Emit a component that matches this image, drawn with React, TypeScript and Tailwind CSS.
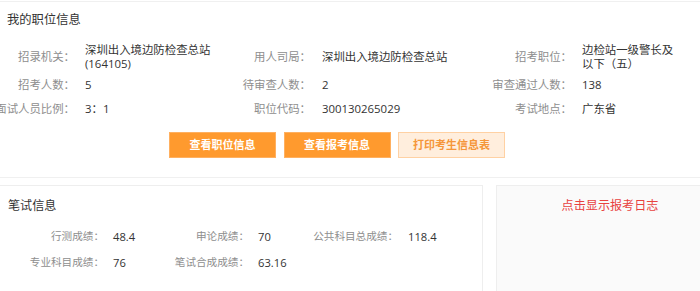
import React from "react";

const FONT = { fontFamily: '"Open Sans", "Noto Sans CJK SC", sans-serif' };

function TopLabel({ children, pr = "pr-[10px]" }: { children: React.ReactNode; pr?: string }) {
  return (
    <div className={`flex items-center justify-end whitespace-nowrap text-[11.4px] text-[#8e8e8e] ${pr}`}>
      {children}
    </div>
  );
}

function TopValue({ children }: { children: React.ReactNode }) {
  return <div className="flex items-center text-[11.4px] leading-[14px] text-[#333]">{children}</div>;
}

function BtmLabel({ children, pr = "pr-[9px]" }: { children: React.ReactNode; pr?: string }) {
  return (
    <div className={`flex items-center justify-end whitespace-nowrap text-[10.6px] text-[#8e8e8e] ${pr}`}>
      {children}
    </div>
  );
}

function BtmValue({ children }: { children: React.ReactNode }) {
  return <div className="flex items-center whitespace-nowrap text-[11.2px] text-[#333]">{children}</div>;
}

export default function App() {
  return (
    <div className="w-[700px] h-[291px] overflow-hidden bg-white" style={FONT}>
      <div className="w-[724px]">
        {/* Top card */}
        <div className="mt-px border-t border-b border-[#f0f0f0]">
          <div className="pt-[10px] pl-[7px] text-[12.3px] leading-[16px] text-[#333]">我的职位信息</div>
          <div className="mt-[13px] grid grid-cols-[85px_126px_111px_150px_110px_96px] grid-rows-[32px_24px_24px]">
            <TopLabel>招录机关：</TopLabel>
            <TopValue>
              <span>
                深圳出入境边防检查总站
                <br />
                (164105)
              </span>
            </TopValue>
            <TopLabel pr="pr-[11px]">用人司局：</TopLabel>
            <TopValue>深圳出入境边防检查总站</TopValue>
            <TopLabel>招考职位：</TopLabel>
            <TopValue>
              <span>
                边检站一级警长及
                <br />
                以下（五）
              </span>
            </TopValue>

            <TopLabel>招考人数：</TopLabel>
            <TopValue>5</TopValue>
            <TopLabel pr="pr-[11px]">待审查人数：</TopLabel>
            <TopValue>2</TopValue>
            <TopLabel>审查通过人数：</TopLabel>
            <TopValue>138</TopValue>

            <TopLabel>面试人员比例：</TopLabel>
            <TopValue>3：1</TopValue>
            <TopLabel pr="pr-[11px]">职位代码：</TopLabel>
            <TopValue>300130265029</TopValue>
            <TopLabel>考试地点：</TopLabel>
            <TopValue>广东省</TopValue>
          </div>
          <div className="mt-[11px] pb-[19px] pl-[169px] flex gap-[7.5px]">
            <button className="w-[107px] h-[26px] bg-[#ff9a2e] border border-[#ffb060] text-white font-bold text-[11px]">
              查看职位信息
            </button>
            <button className="w-[107px] h-[26px] bg-[#ff9a2e] border border-[#ffb060] text-white font-bold text-[11px]">
              查看报考信息
            </button>
            <button className="w-[107px] h-[26px] bg-[#ffeedd] border border-[#ffd1a3] text-[#f5963a] font-bold text-[11px]">
              打印考生信息表
            </button>
          </div>
        </div>

        {/* Bottom */}
        <div className="mt-[7px] flex">
          <div className="-ml-px w-[484px] border border-[#eeeeee]">
            <div className="pt-[12px] pl-[8px] text-[12.1px] leading-[16px] text-[#333]">笔试信息</div>
            <div className="mt-[10px] pb-[10px] grid grid-cols-[113px_48px_97px_43px_107px_70px] grid-rows-[26px_26px]">
              <BtmLabel>行测成绩：</BtmLabel>
              <BtmValue>48.4</BtmValue>
              <BtmLabel>申论成绩：</BtmLabel>
              <BtmValue>70</BtmValue>
              <BtmLabel pr="pr-[10px]">公共科目总成绩：</BtmLabel>
              <BtmValue>118.4</BtmValue>

              <BtmLabel>专业科目成绩：</BtmLabel>
              <BtmValue>76</BtmValue>
              <BtmLabel>笔试合成成绩：</BtmLabel>
              <BtmValue>63.16</BtmValue>
              <div />
              <div />
            </div>
          </div>
          <div className="ml-[13px] w-[228px] h-[140px] bg-[#fafafa] border border-[#eeeeee]">
            <div className="pt-[12px] text-center text-[12.1px] leading-[16px] text-[#e8423f]">点击显示报考日志</div>
          </div>
        </div>
      </div>
    </div>
  );
}
